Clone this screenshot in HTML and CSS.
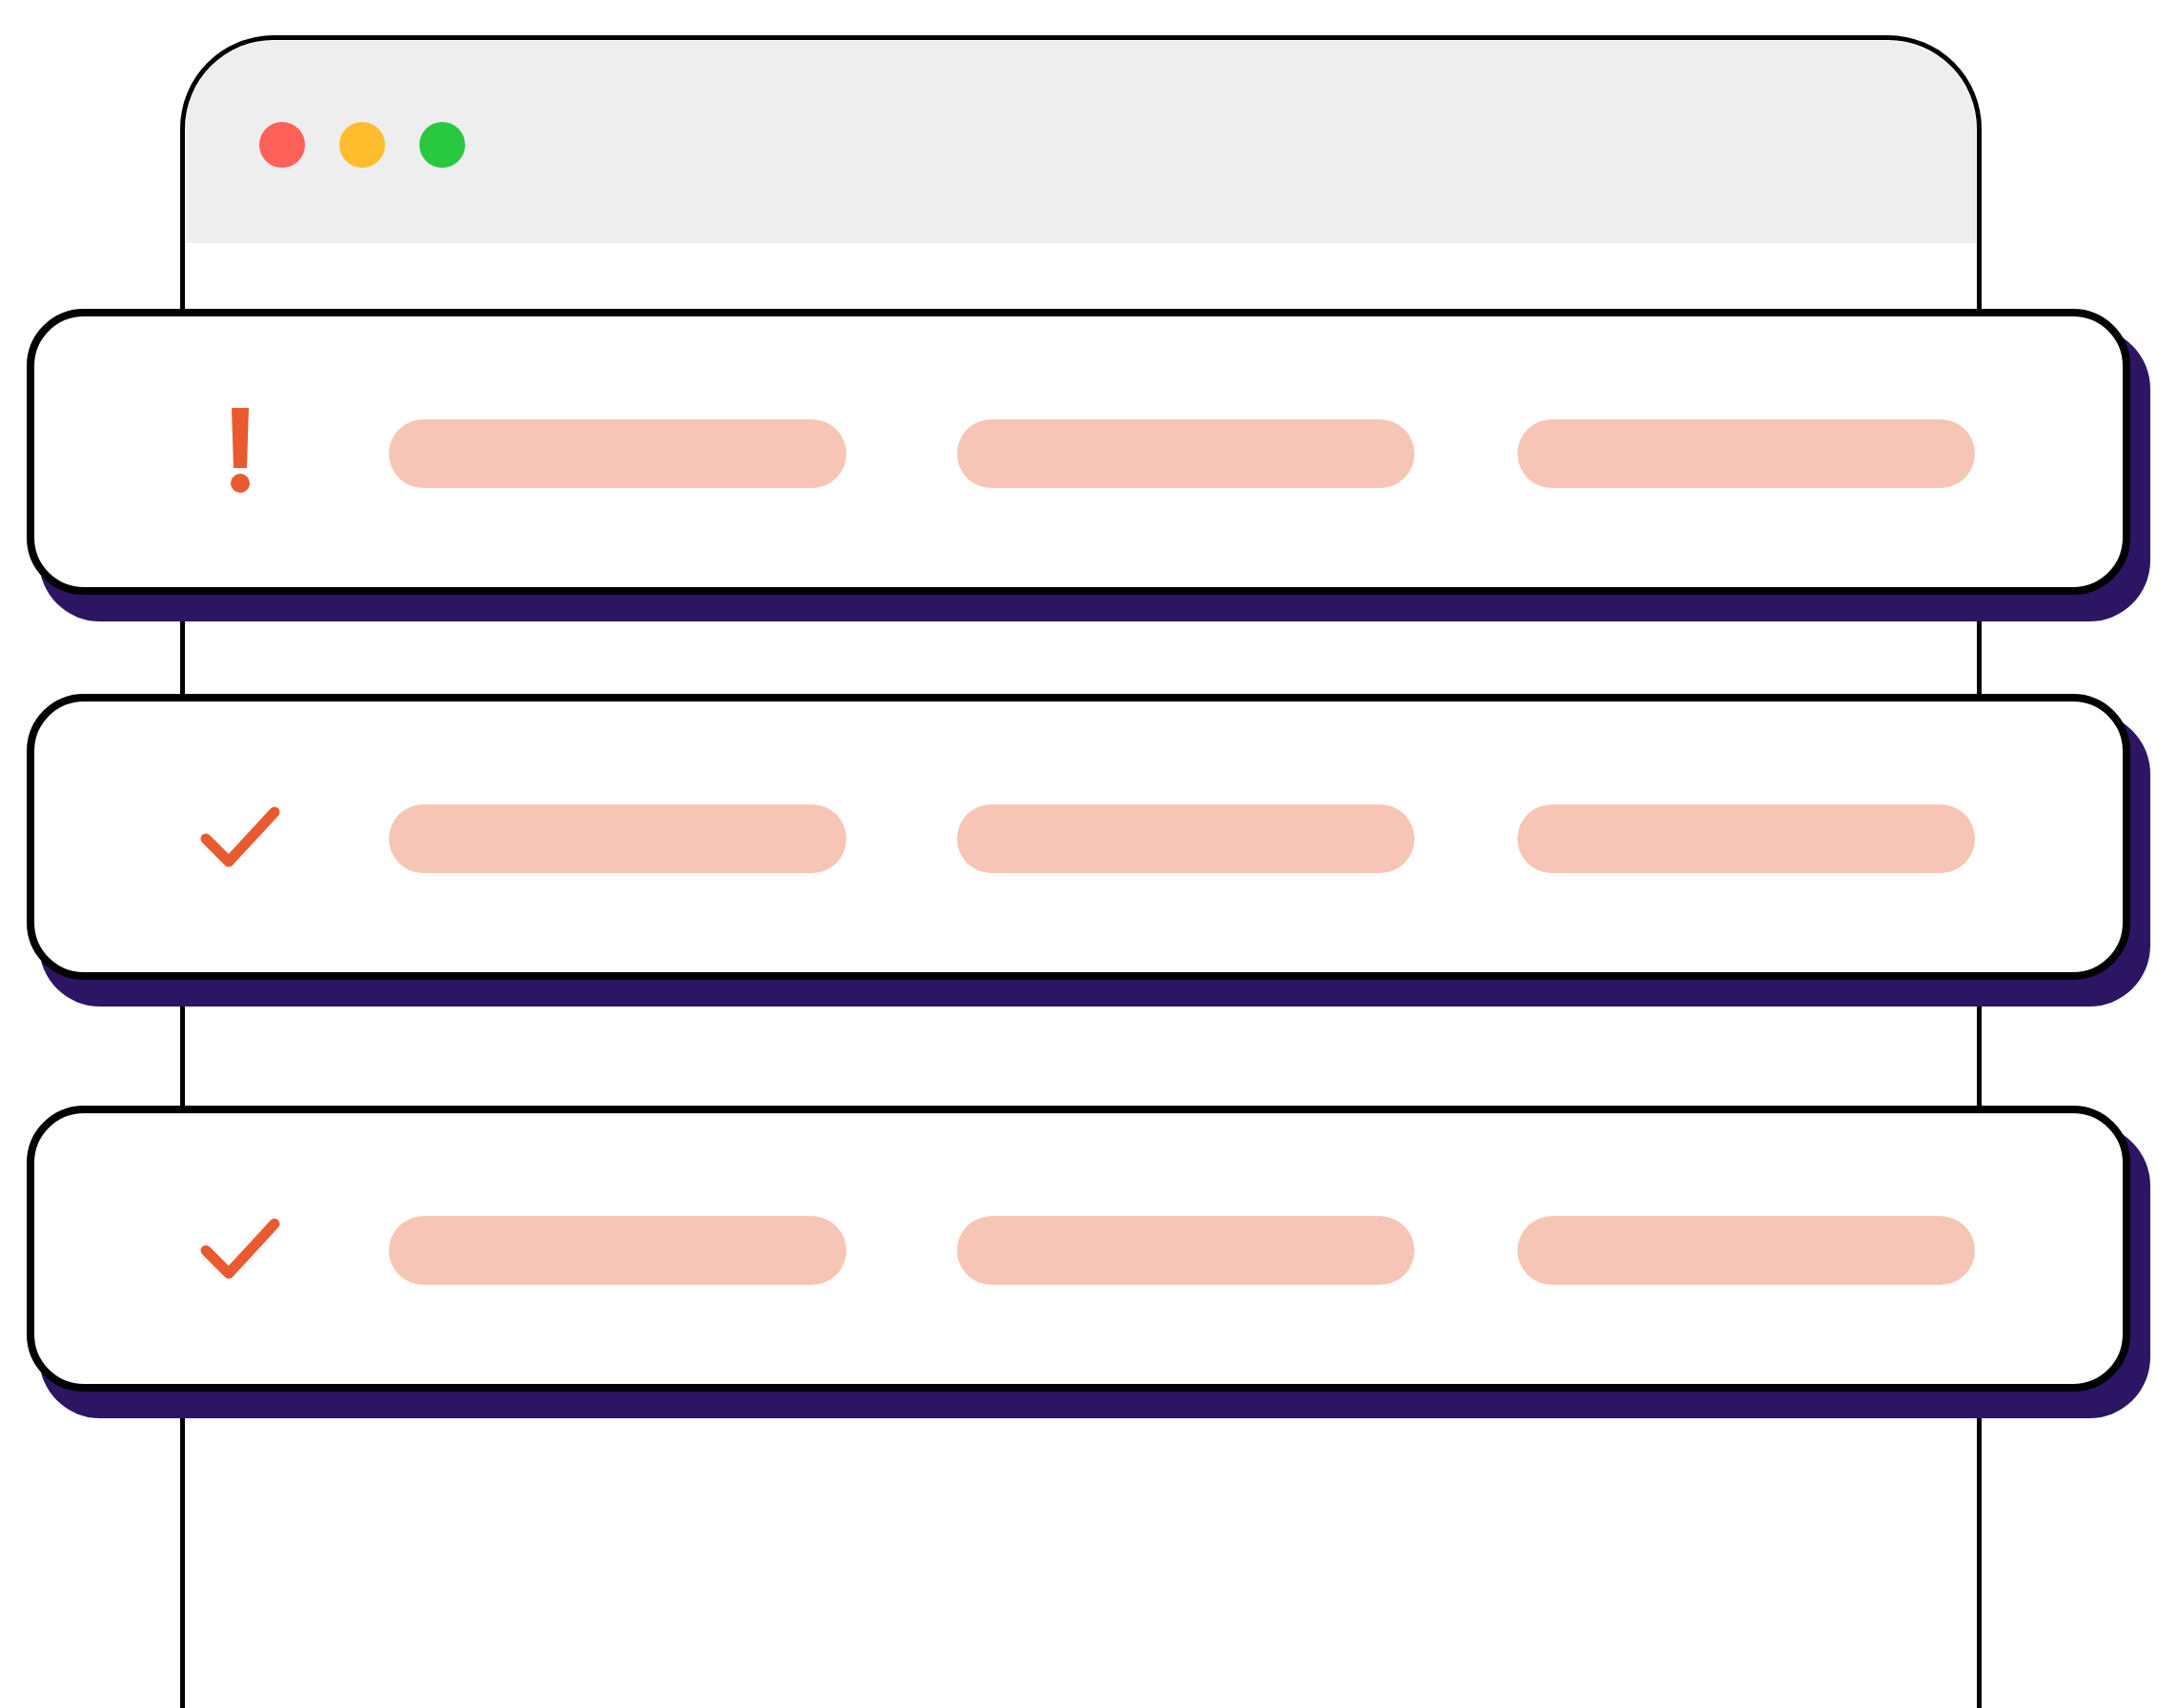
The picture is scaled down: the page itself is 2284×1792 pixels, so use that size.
FILE: index.html
```html
<!DOCTYPE html>
<html lang="en">
<head>
<meta charset="utf-8">
<title>Task list</title>
<link rel="stylesheet" href="styles.css">
</head>
<body>
<div class="stage">
  <div class="window">
    <div class="titlebar">
      <span class="light light-red"></span>
      <span class="light light-yellow"></span>
      <span class="light light-green"></span>
    </div>
  </div>

  <div class="cards">
    <div class="card">
      <svg class="icon" viewBox="0 0 100 100" width="100" height="100" aria-hidden="true">
        <polygon points="41,4 59,4 57,67 43,67" fill="#EA5A2F"/>
        <circle cx="50" cy="83" r="10" fill="#EA5A2F"/>
      </svg>
      <div class="pills">
        <span class="pill"></span>
        <span class="pill pill-2"></span>
        <span class="pill pill-3"></span>
      </div>
    </div>

    <div class="card card-2">
      <svg class="icon" viewBox="0 0 100 100" width="100" height="100" aria-hidden="true">
        <polyline points="14,52 38,76 86,24" fill="none" stroke="#EA5A2F" stroke-width="11" stroke-linecap="round" stroke-linejoin="round"/>
      </svg>
      <div class="pills">
        <span class="pill"></span>
        <span class="pill pill-2"></span>
        <span class="pill pill-3"></span>
      </div>
    </div>

    <div class="card card-3">
      <svg class="icon" viewBox="0 0 100 100" width="100" height="100" aria-hidden="true">
        <polyline points="14,52 38,76 86,24" fill="none" stroke="#EA5A2F" stroke-width="11" stroke-linecap="round" stroke-linejoin="round"/>
      </svg>
      <div class="pills">
        <span class="pill"></span>
        <span class="pill pill-2"></span>
        <span class="pill pill-3"></span>
      </div>
    </div>
  </div>
</div>
</body>
</html>
```

FILE: styles.css
```css
html, body {
  margin: 0;
  padding: 0;
  background: #ffffff;
  overflow: hidden;
  font-family: "Liberation Sans", Arial, sans-serif;
}

.stage {
  display: grid;
  width: 2284px;
  height: 1792px;
  overflow: hidden;
}

.stage > * {
  grid-area: 1 / 1;
}

.window {
  box-sizing: border-box;
  margin: 37px 0 0 189px;
  width: 1890px;
  height: 1820px;
  border: 5px solid #000000;
  border-bottom: none;
  border-radius: 98px 98px 0 0;
  background: #ffffff;
  padding: 1px 1px 0 1px;
  align-self: start;
  justify-self: start;
}

.titlebar {
  box-sizing: border-box;
  height: 212px;
  background: #eeeeee;
  border-radius: 92px 92px 0 0;
  display: flex;
  gap: 36px;
  padding: 85px 0 0 77px;
}

.light {
  width: 48px;
  height: 48px;
  border-radius: 50%;
  display: block;
}

.light-red { background: #ff6159; }
.light-yellow { background: #ffbd2e; }
.light-green { background: #28c840; }

.cards {
  margin: 324px 0 0 28px;
  display: flex;
  flex-direction: column;
  align-self: start;
  justify-self: start;
}

.card {
  box-sizing: border-box;
  width: 2207px;
  height: 300px;
  border: 8px solid #000000;
  border-radius: 60px;
  background: #ffffff;
  box-shadow: 17px 24px 0 4px #2c1563;
  display: flex;
  align-items: center;
}

.card-2 { margin-top: 104px; }
.card-3 { margin-top: 132px; }

.icon {
  display: block;
  flex: none;
  overflow: visible;
  margin-left: 166px;
}

.pills {
  display: flex;
  margin-left: 106px;
  margin-top: 4px;
}

.pill {
  display: block;
  width: 480px;
  height: 72px;
  border-radius: 36px;
  background: #f7c5b5;
}

.pill-2 { margin-left: 116px; }
.pill-3 { margin-left: 108px; }
```
